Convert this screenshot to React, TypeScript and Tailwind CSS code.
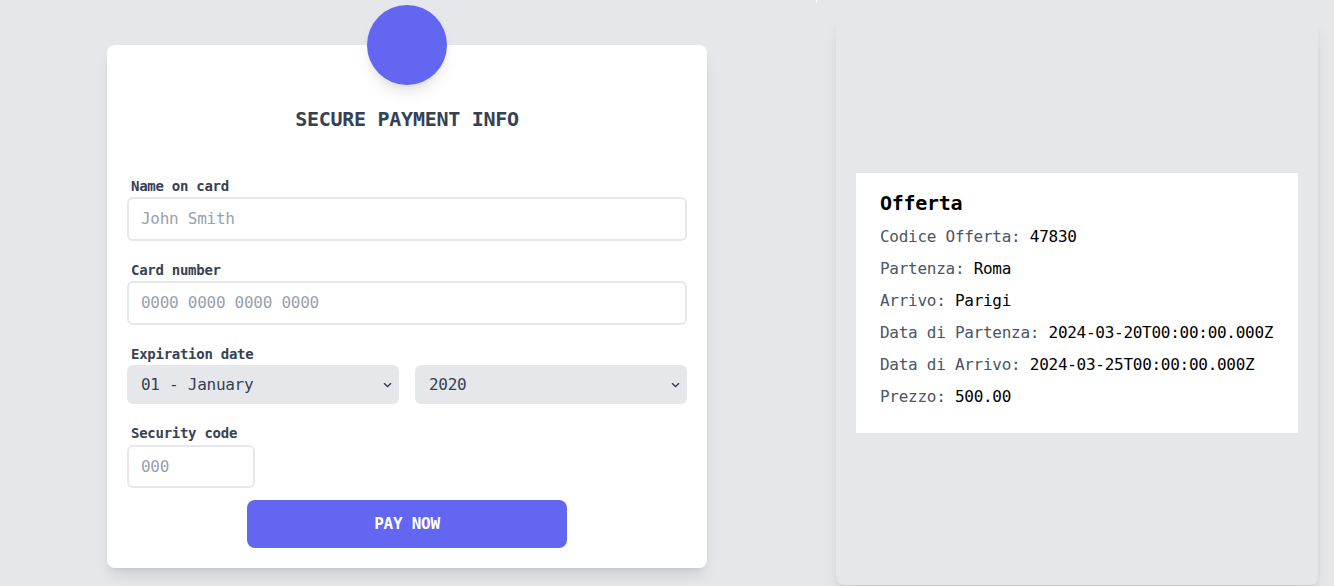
const months = [
  '01 - January',
  '02 - February',
  '03 - March',
  '04 - April',
  '05 - May',
  '06 - June',
  '07 - July',
  '08 - August',
  '09 - September',
  '10 - October',
  '11 - November',
  '12 - December',
];

const years = ['2020', '2021', '2022', '2023', '2024', '2025'];

const offerta = [
  { label: 'Codice Offerta', value: '47830' },
  { label: 'Partenza', value: 'Roma' },
  { label: 'Arrivo', value: 'Parigi' },
  { label: 'Data di Partenza', value: '2024-03-20T00:00:00.000Z' },
  { label: 'Data di Arrivo', value: '2024-03-25T00:00:00.000Z' },
  { label: 'Prezzo', value: '500.00' },
];

function Label({ children, className = '' }: { children: React.ReactNode; className?: string }) {
  return <div className={`ml-1 text-sm font-bold leading-5 text-gray-700 ${className}`}>{children}</div>;
}

function Select({ options }: { options: string[] }) {
  return (
    <div className="relative">
      <select className="h-[39px] w-full appearance-none rounded-md bg-gray-200 pl-3.5 pr-8 text-base text-gray-700 outline-none">
        {options.map((o) => (
          <option key={o}>{o}</option>
        ))}
      </select>
      <svg
        className="pointer-events-none absolute top-1/2 right-[7px] -translate-y-1/2"
        width="9"
        height="6"
        viewBox="0 0 9 6"
        fill="none"
      >
        <path d="M1 1.2 4.5 4.6 8 1.2" stroke="#374151" strokeWidth="1.4" />
      </svg>
    </div>
  );
}

function PaymentCard() {
  return (
    <div className="mt-[45px] ml-[107px] w-[600px] shrink-0 self-start rounded-lg bg-white px-5 pb-5 shadow-lg">
      <div className="mx-auto -mt-10 h-20 w-20 rounded-full bg-[#6366f1] shadow-lg" />
      <div className="mt-5 text-center text-xl font-bold leading-7 uppercase text-gray-700">Secure payment info</div>

      <Label className="mt-[43px]">Name on card</Label>
      <input
        className="mt-px block w-full rounded-md border-2 border-gray-200 px-3 py-2 text-base leading-6 text-gray-700 outline-none placeholder:text-gray-400"
        placeholder="John Smith"
      />

      <Label className="mt-[19px]">Card number</Label>
      <input
        className="mt-px block w-full rounded-md border-2 border-gray-200 px-3 py-2 text-base leading-6 text-gray-700 outline-none placeholder:text-gray-400"
        placeholder="0000 0000 0000 0000"
      />

      <Label className="mt-[19px]">Expiration date</Label>
      <div className="mt-px grid grid-cols-2 gap-4">
        <Select options={months} />
        <Select options={years} />
      </div>

      <Label className="mt-[19px]">Security code</Label>
      <input
        className="mt-0.5 block h-[43px] w-32 rounded-md border-2 border-gray-200 px-3 text-base text-gray-700 outline-none placeholder:text-gray-400"
        placeholder="000"
      />

      <button className="mx-auto mt-3 block h-12 w-80 rounded-lg bg-[#6366f1] text-base font-bold text-white">
        PAY NOW
      </button>
    </div>
  );
}

function OffertaPanel() {
  return (
    <div className="mt-[17px] ml-[129px] flex h-[568px] w-[482px] shrink-0 flex-col justify-center rounded-lg bg-gray-200 px-5 shadow-lg">
      <div className="mt-1 bg-white px-6 pt-4 pb-4">
        <div className="mb-2 text-xl font-bold leading-7 text-black">Offerta</div>
        {offerta.map((row) => (
          <p key={row.label} className="mb-2 text-base leading-6">
            <span className="text-gray-600">{row.label}: </span>
            <span className="text-black">{row.value}</span>
          </p>
        ))}
      </div>
    </div>
  );
}

export default function App() {
  return (
    <div
      className="relative flex h-[586px] w-full items-start overflow-hidden bg-gray-200 tracking-[-0.017em]"
      style={{ fontFamily: '"DejaVu Sans Mono", "Liberation Mono", monospace' }}
    >
      <div className="absolute top-0 left-[816px] h-[3px] w-px bg-white" />
      <PaymentCard />
      <OffertaPanel />
    </div>
  );
}
